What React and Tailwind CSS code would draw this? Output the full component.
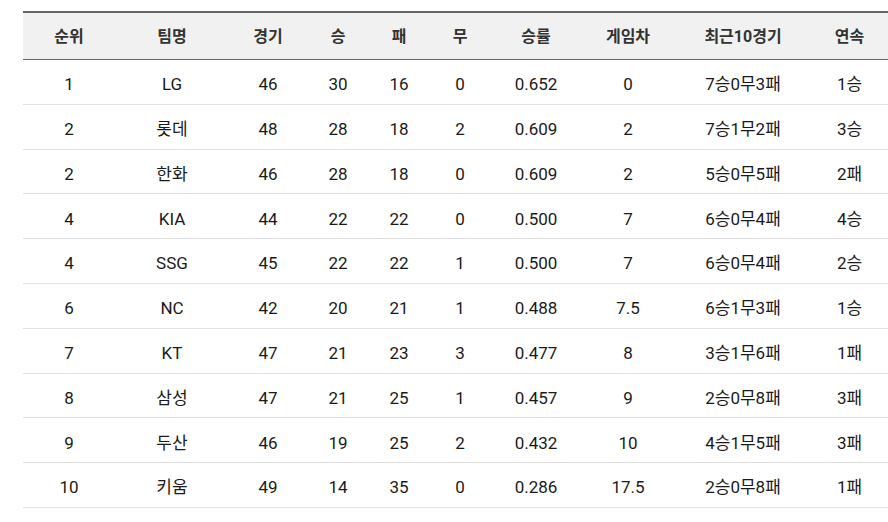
import React from "react";

const headers = ["순위", "팀명", "경기", "승", "패", "무", "승률", "게임차", "최근10경기", "연속"];
const widths = ["w-[92px]", "w-[114px]", "w-[78px]", "w-[62px]", "w-[60px]", "w-[62px]", "w-[90px]", "w-[94px]", "w-[136px]", "w-[77px]"];

const rows = [
  ["1", "LG", "46", "30", "16", "0", "0.652", "0", "7승0무3패", "1승"],
  ["2", "롯데", "48", "28", "18", "2", "0.609", "2", "7승1무2패", "3승"],
  ["2", "한화", "46", "28", "18", "0", "0.609", "2", "5승0무5패", "2패"],
  ["4", "KIA", "44", "22", "22", "0", "0.500", "7", "6승0무4패", "4승"],
  ["4", "SSG", "45", "22", "22", "1", "0.500", "7", "6승0무4패", "2승"],
  ["6", "NC", "42", "20", "21", "1", "0.488", "7.5", "6승1무3패", "1승"],
  ["7", "KT", "47", "21", "23", "3", "0.477", "8", "3승1무6패", "1패"],
  ["8", "삼성", "47", "21", "25", "1", "0.457", "9", "2승0무8패", "3패"],
  ["9", "두산", "46", "19", "25", "2", "0.432", "10", "4승1무5패", "3패"],
  ["10", "키움", "49", "14", "35", "0", "0.286", "17.5", "2승0무8패", "1패"],
];

export default function App() {
  return (
    <div className="w-[888px] h-[522px] bg-white overflow-hidden pt-[11px] pl-[23px] font-['Roboto','Noto_Sans_CJK_KR',sans-serif]">
      <table className="w-[865px] table-fixed border-collapse">
        <thead>
          <tr className="bg-[#f1f1f1] border-t-2 border-t-[#666666] border-b border-b-[#666666]">
            {headers.map((h, i) => (
              <th key={i} className={`${widths[i]} h-[47.6px] px-0 pt-[2px] pb-0 text-center text-[16px] font-bold text-[#333333]`}>
                {h}
              </th>
            ))}
          </tr>
        </thead>
        <tbody>
          {rows.map((r, ri) => (
            <tr key={ri} className="border-b border-b-[#e2e2e2]">
              {r.map((c, ci) => (
                <td key={ci} className="h-[44.8px] px-0 pt-[6px] pb-0 text-center text-[17px] text-[#1a1a1a]">
                  {c}
                </td>
              ))}
            </tr>
          ))}
        </tbody>
      </table>
    </div>
  );
}
